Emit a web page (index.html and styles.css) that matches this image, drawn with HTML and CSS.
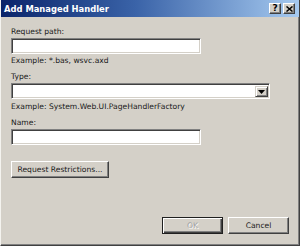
FILE: index.html
```html
<!DOCTYPE html>
<html>
<head>
<meta charset="utf-8">
<link rel="stylesheet" href="styles.css">
</head>
<body>
<div class="window">
  <div class="titlebar">
    <span class="title">Add Managed Handler</span>
    <div class="tbtns">
      <span class="tbtn">?</span>
      <span class="tbtn x">
        <svg width="7" height="6" viewBox="0 0 7 6"><path d="M0.5 0.5 L6.5 5.5 M6.5 0.5 L0.5 5.5" stroke="#000" stroke-width="1.5"/></svg>
      </span>
    </div>
  </div>
  <div class="content">
    <div class="label l1">Request path:</div>
    <div class="textbox"></div>
    <div class="hint h1">Example: *.bas, wsvc.axd</div>
    <div class="label l2">Type:</div>
    <div class="select">
      <div class="sel-field"></div>
      <div class="sel-arrow"><svg width="7" height="4" viewBox="0 0 7 4"><path d="M0 0 H7 L3.5 4 Z" fill="#000"/></svg></div>
    </div>
    <div class="hint h2">Example: System.Web.UI.PageHandlerFactory</div>
    <div class="label l3">Name:</div>
    <div class="textbox"></div>
    <button class="btn rr">Request Restrictions...</button>
    <div class="footer">
      <button class="btn ok" disabled>OK</button>
      <button class="btn">Cancel</button>
    </div>
  </div>
</div>
</body>
</html>
```
FILE: styles.css
```css
html, body {
  margin: 0;
  padding: 0;
  background: #d4d0c8;
}
.window {
  width: 300px;
  height: 246px;
  box-sizing: border-box;
  background: #d4d0c8;
  border-left: 1px solid #f4f3ef;
  border-right: 1px solid #404040;
  border-bottom: 1px solid #404040;
  box-shadow: inset -1px -1px 0 #808080;
  font-family: "DejaVu Sans", sans-serif;
  font-size: 7.6px;
  color: #1a1a1a;
  position: relative;
}
.titlebar {
  height: 17px;
  background: linear-gradient(to right, #0a246a 0%, #3a63a8 45%, #a6caf0 100%);
  display: flex;
  align-items: center;
  justify-content: space-between;
  padding: 0 4px 0 3px;
}
.title {
  color: #fff;
  font-weight: bold;
  font-size: 8.4px;
}
.tbtns {
  display: flex;
  gap: 2px;
}
.tbtn {
  width: 12px;
  height: 11px;
  box-sizing: border-box;
  background: #d4d0c8;
  border-top: 1px solid #fff;
  border-left: 1px solid #fff;
  border-right: 1px solid #404040;
  border-bottom: 1px solid #404040;
  box-shadow: inset -1px -1px 0 #808080;
  display: flex;
  align-items: center;
  justify-content: center;
  font-weight: bold;
  font-size: 9px;
  color: #000;
  line-height: 1;
}
.content {
  padding-left: 10px;
}
.label, .hint {
  line-height: 11px;
  white-space: nowrap;
}
.l1 { margin-top: 9px; }
.textbox {
  margin-top: 1px;
  width: 190px;
  height: 16px;
  box-sizing: border-box;
  background: #fff;
  border-top: 1px solid #808080;
  border-left: 1px solid #808080;
  border-right: 1px solid #fff;
  border-bottom: 1px solid #fff;
  box-shadow: inset 1px 1px 0 #404040, inset -1px -1px 0 #d4d0c8;
}
.h1 { margin-top: 1px; }
.l2 { margin-top: 5px; }
.select {
  margin-top: 1px;
  width: 259px;
  height: 16px;
  box-sizing: border-box;
  background: #fff;
  border-top: 1px solid #808080;
  border-left: 1px solid #808080;
  border-right: 1px solid #fff;
  border-bottom: 1px solid #fff;
  box-shadow: inset 1px 1px 0 #404040, inset -1px -1px 0 #d4d0c8;
  display: flex;
  padding: 2px 1px 1px 2px;
}
.sel-field { flex: 1; }
.sel-arrow {
  width: 13px;
  box-sizing: border-box;
  background: #d4d0c8;
  border-top: 1px solid #d4d0c8;
  border-left: 1px solid #d4d0c8;
  border-right: 1px solid #404040;
  border-bottom: 1px solid #404040;
  box-shadow: inset 1px 1px 0 #fff, inset -1px -1px 0 #808080;
  display: flex;
  align-items: center;
  justify-content: center;
}
.h2 { margin-top: 2px; }
.l3 { margin-top: 5px; }
.btn {
  display: block;
  box-sizing: border-box;
  height: 17px;
  padding: 0;
  background: #d4d0c8;
  border-top: 1px solid #fff;
  border-left: 1px solid #fff;
  border-right: 1px solid #404040;
  border-bottom: 1px solid #404040;
  box-shadow: inset -1px -1px 0 #808080;
  font-family: "DejaVu Sans", sans-serif;
  font-size: 7.6px;
  color: #1a1a1a;
}
.rr {
  margin-top: 16px;
  width: 98px;
}
.footer {
  display: flex;
  justify-content: flex-end;
  gap: 5px;
  margin-top: 39px;
  padding-right: 10px;
}
.footer .btn { width: 61px; }
.ok {
  border: 1px solid #202020;
  box-shadow: inset 1px 1px 0 #fff, inset -1px -1px 0 #404040, inset -2px -2px 0 #808080;
  color: #a0a0a0;
  text-shadow: 1px 1px 0 #fff;
}
```
